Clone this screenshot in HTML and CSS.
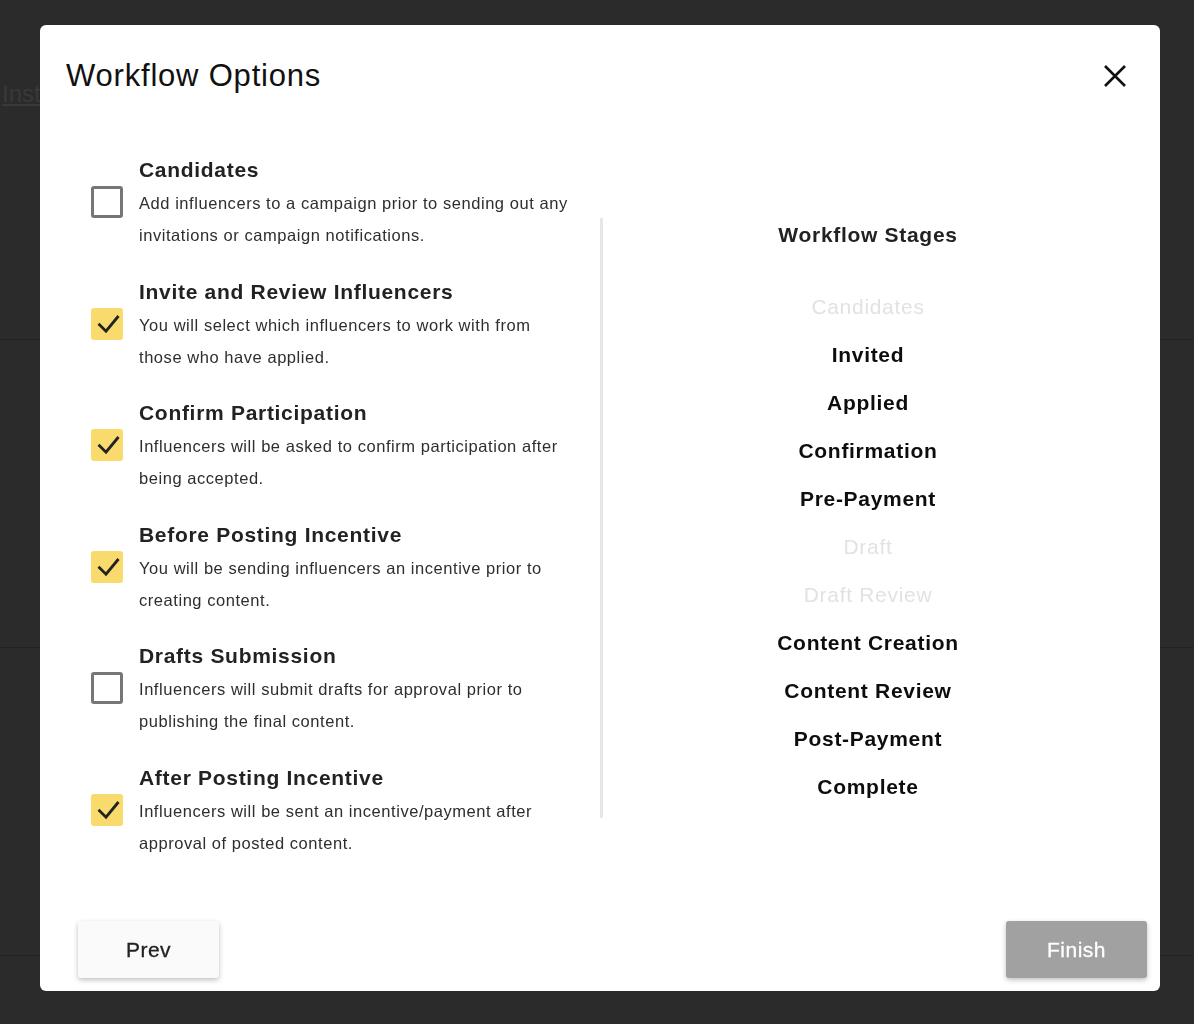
FILE: index.html
```html
<!DOCTYPE html>
<html>
<head>
<meta charset="utf-8">
<title>Workflow Options</title>
<link rel="stylesheet" href="styles.css">
</head>
<body>
<div class="page">
  <div class="page-head"><a class="page-link">Inst</a></div>
  <div class="bg-rows">
    <div class="bg-row"></div>
    <div class="bg-row"></div>
    <div class="bg-row short"></div>
  </div>
</div>

<div class="modal">
  <div class="modal-header">
    <h1 class="modal-title">Workflow Options</h1>
    <button class="close-btn" aria-label="Close">
      <svg width="22" height="22" viewBox="0 0 22 22"><path d="M1 1 L21 21 M21 1 L1 21" stroke="#111" stroke-width="2.6" fill="none"/></svg>
    </button>
  </div>

  <div class="modal-body">
    <div class="options">
      <div class="option">
        <span class="box"></span>
        <div class="option-text">
          <div class="option-title">Candidates</div>
          <div class="option-desc">Add influencers to a campaign prior to sending out any invitations or campaign notifications.</div>
        </div>
      </div>
      <div class="option">
        <span class="box checked"><svg width="32" height="32" viewBox="0 0 32 32"><path d="M7.5 15.8 L15 23.2 L27.5 8" stroke="#222" stroke-width="2.8" fill="none"/></svg></span>
        <div class="option-text">
          <div class="option-title">Invite and Review Influencers</div>
          <div class="option-desc">You will select which influencers to work with from those who have applied.</div>
        </div>
      </div>
      <div class="option">
        <span class="box checked"><svg width="32" height="32" viewBox="0 0 32 32"><path d="M7.5 15.8 L15 23.2 L27.5 8" stroke="#222" stroke-width="2.8" fill="none"/></svg></span>
        <div class="option-text">
          <div class="option-title">Confirm Participation</div>
          <div class="option-desc">Influencers will be asked to confirm participation after being accepted.</div>
        </div>
      </div>
      <div class="option">
        <span class="box checked"><svg width="32" height="32" viewBox="0 0 32 32"><path d="M7.5 15.8 L15 23.2 L27.5 8" stroke="#222" stroke-width="2.8" fill="none"/></svg></span>
        <div class="option-text">
          <div class="option-title">Before Posting Incentive</div>
          <div class="option-desc">You will be sending influencers an incentive prior to creating content.</div>
        </div>
      </div>
      <div class="option">
        <span class="box"></span>
        <div class="option-text">
          <div class="option-title">Drafts Submission</div>
          <div class="option-desc">Influencers will submit drafts for approval prior to publishing the final content.</div>
        </div>
      </div>
      <div class="option">
        <span class="box checked"><svg width="32" height="32" viewBox="0 0 32 32"><path d="M7.5 15.8 L15 23.2 L27.5 8" stroke="#222" stroke-width="2.8" fill="none"/></svg></span>
        <div class="option-text">
          <div class="option-title">After Posting Incentive</div>
          <div class="option-desc">Influencers will be sent an incentive/payment after approval of posted content.</div>
        </div>
      </div>
    </div>

    <div class="stages">
      <div class="stages-title">Workflow Stages</div>
      <ul class="stage-list">
        <li class="stage off">Candidates</li>
        <li class="stage">Invited</li>
        <li class="stage">Applied</li>
        <li class="stage">Confirmation</li>
        <li class="stage">Pre-Payment</li>
        <li class="stage off">Draft</li>
        <li class="stage off">Draft Review</li>
        <li class="stage">Content Creation</li>
        <li class="stage">Content Review</li>
        <li class="stage">Post-Payment</li>
        <li class="stage">Complete</li>
      </ul>
    </div>
  </div>

  <div class="modal-footer">
    <button class="btn btn-prev">Prev</button>
    <button class="btn btn-finish">Finish</button>
  </div>
</div>
</body>
</html>
```

FILE: styles.css
```css
html, body {
  margin: 0;
  padding: 0;
}
body {
  background: #2b2b2b;
  font-family: "Liberation Sans", Arial, Helvetica, sans-serif;
  width: 1194px;
  height: 1024px;
  overflow: hidden;
}

/* dimmed page behind the modal */
.page {
  padding-top: 80px;
  height: 1024px;
  box-sizing: border-box;
  overflow: hidden;
}
.page-head {
  width: 40px;
  overflow: hidden;
}
.page-link {
  display: block;
  padding-left: 2px;
  font-size: 24px;
  line-height: 28px;
  color: #393939;
  text-decoration: underline;
  white-space: nowrap;
}
.bg-rows {
  margin-top: 231px;
}
.bg-row {
  height: 307px;
  border-top: 1px solid #232323;
}
.bg-row.short {
  height: 60px;
}

/* modal */
.modal {
  position: fixed;
  left: 40px;
  top: 25px;
  width: 1120px;
  height: 966px;
  background: #fff;
  border-radius: 6px;
  display: flex;
  flex-direction: column;
  box-sizing: border-box;
}
.modal-header {
  display: flex;
  justify-content: space-between;
  align-items: flex-start;
  padding: 33px 34px 0 26px;
}
.modal-title {
  margin: 0;
  font-size: 31px;
  line-height: 36px;
  font-weight: normal;
  letter-spacing: 0.8px;
  color: #111;
}
.close-btn {
  border: 0;
  background: none;
  padding: 0;
  margin-top: 7px;
  width: 22px;
  height: 22px;
  cursor: pointer;
}
.close-btn svg {
  display: block;
}

.modal-body {
  flex: 1;
  display: flex;
  align-items: flex-start;
  padding: 64px 27px 0 51px;
}

.options {
  width: 509px;
  display: flex;
  flex-direction: column;
  gap: 28.6px;
}
.option {
  display: flex;
  align-items: flex-start;
  gap: 16px;
}
.box {
  flex: none;
  width: 32px;
  height: 32px;
  margin-top: 28px;
  box-sizing: border-box;
  border: 3px solid #767676;
  border-radius: 3px;
  background: #fff;
}
.box.checked {
  border: 0;
  background: #f9db6d;
}
.box svg {
  display: block;
}
.option-text {
  width: 438px;
}
.option-title {
  font-size: 21px;
  line-height: 24px;
  font-weight: bold;
  letter-spacing: 0.7px;
  color: #222;
  margin-bottom: 5px;
}
.option-desc {
  font-size: 16.5px;
  line-height: 32px;
  letter-spacing: 0.55px;
  color: #2e2e2e;
}

.stages {
  flex: 1;
  height: 600px;
  margin-top: 60px;
  border-left: 3px solid #e6e6e6;
  text-align: center;
}
.stages-title {
  margin-top: 2px;
  font-size: 21px;
  line-height: 30px;
  font-weight: bold;
  letter-spacing: 0.7px;
  color: #222;
}
.stage-list {
  list-style: none;
  margin: 32.7px 0 0;
  padding: 0;
}
.stage {
  font-size: 21px;
  line-height: 48px;
  font-weight: bold;
  letter-spacing: 0.7px;
  color: #0d0d0d;
}
.stage.off {
  font-weight: normal;
  color: #e2e2e2;
}

.modal-footer {
  display: flex;
  justify-content: space-between;
  padding: 0 13px 13px 38px;
}
.btn {
  width: 141px;
  height: 57px;
  border: 0;
  border-radius: 3px;
  font-family: "Liberation Sans", Arial, Helvetica, sans-serif;
  font-size: 21px;
  letter-spacing: 0.5px;
  -webkit-text-stroke: 0.3px currentColor;
  box-shadow: 0 2px 5px rgba(0, 0, 0, 0.25);
  cursor: pointer;
}
.btn-prev {
  background: #fafafa;
  color: #222;
}
.btn-finish {
  background: #a1a1a1;
  color: #fff;
}
```
